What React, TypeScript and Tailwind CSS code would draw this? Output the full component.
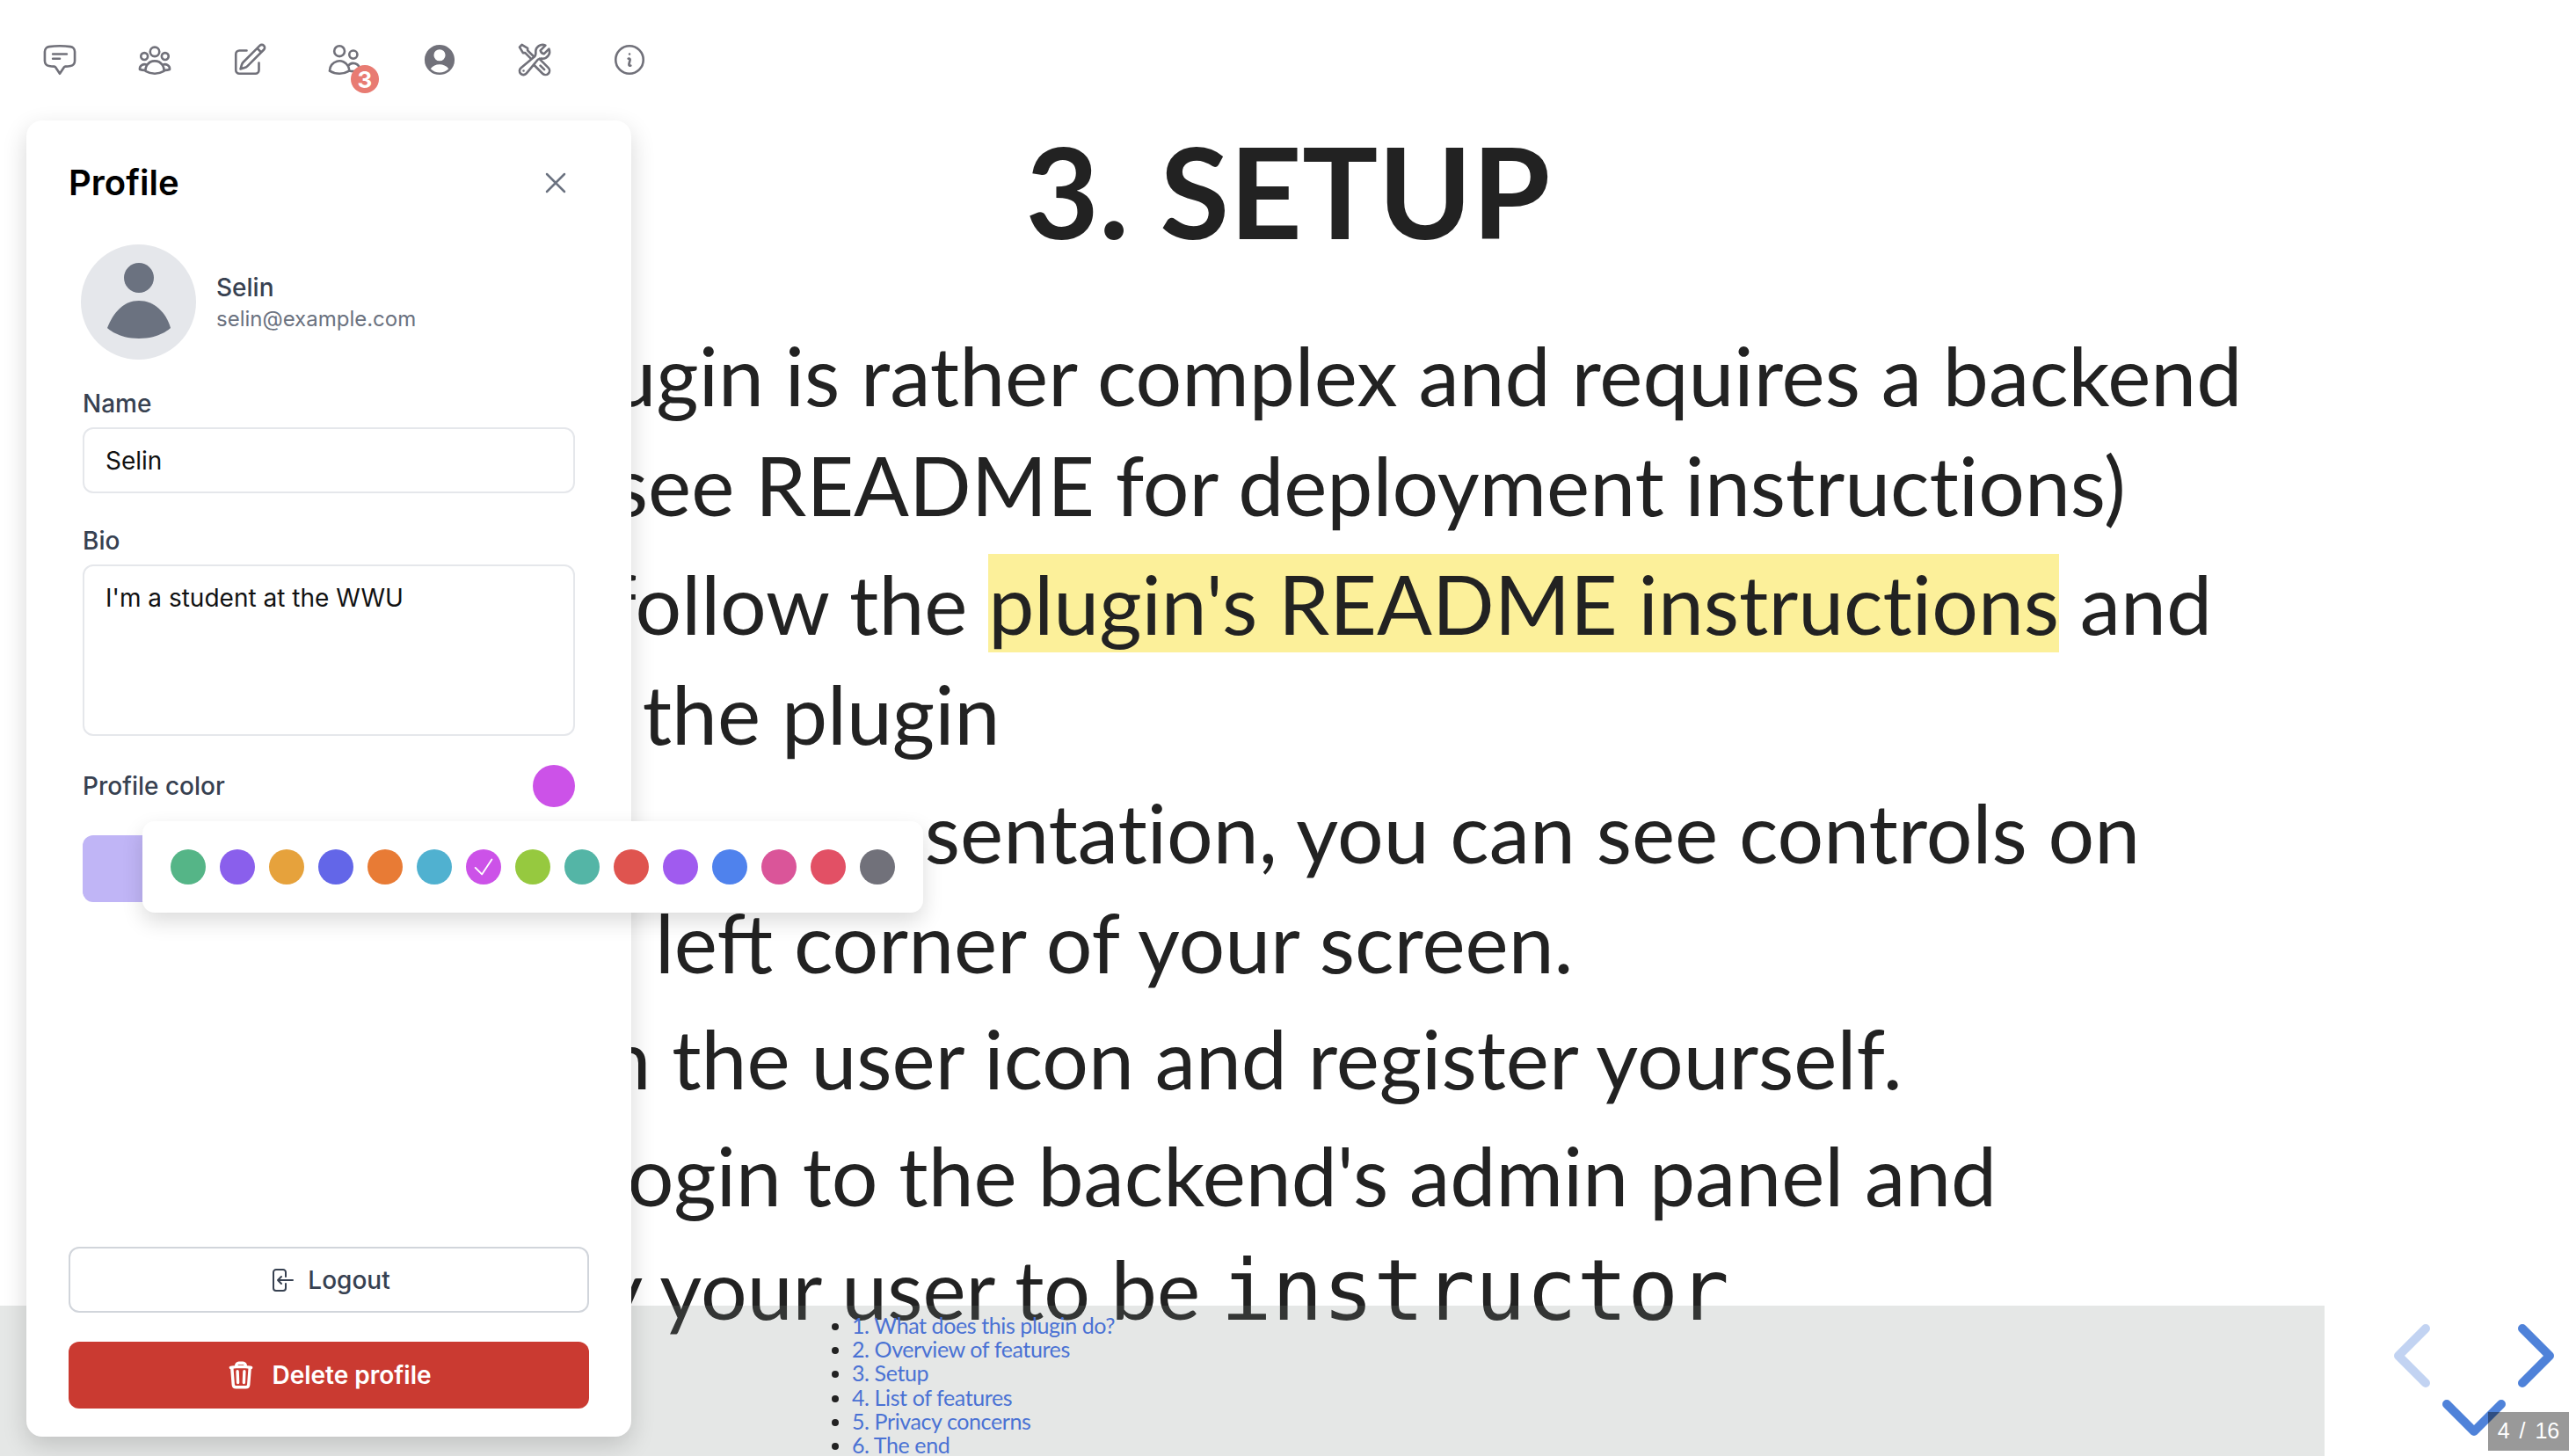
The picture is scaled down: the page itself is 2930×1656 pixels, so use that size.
import React from 'react';
import {
  HiOutlineChatBubbleBottomCenterText,
  HiOutlineUserGroup,
  HiOutlinePencilSquare,
  HiOutlineUsers,
  HiUserCircle,
  HiOutlineWrenchScrewdriver,
  HiOutlineInformationCircle,
  HiOutlineXMark,
  HiOutlineTrash,
  HiOutlineArrowLeftOnRectangle,
  HiOutlineCheck,
} from 'react-icons/hi2';

const swatches = [
  'bg-[#55b587]', 'bg-[#8a5fec]', 'bg-[#e6a23c]', 'bg-[#6366e8]', 'bg-[#e87b35]',
  'bg-[#50b1d0]', 'bg-[#cc52e8]', 'bg-[#96c93f]', 'bg-[#54b5a6]', 'bg-[#df544f]',
  'bg-[#a05bef]', 'bg-[#4f82ed]', 'bg-[#da5599]', 'bg-[#e25065]', 'bg-[#71717a]',
];

const toc = ['1. What does this plugin do?', '2. Overview of features', '3. Setup', '4. List of features', '5. Privacy concerns', '6. The end'];

function Toolbar() {
  return (
    <div className="absolute left-[47px] top-[47px] flex gap-[66px] text-[#71717a]">
      <HiOutlineChatBubbleBottomCenterText className="w-[42px] h-[42px]" />
      <HiOutlineUserGroup className="w-[42px] h-[42px]" />
      <HiOutlinePencilSquare className="w-[42px] h-[42px]" />
      <div className="relative">
        <HiOutlineUsers className="w-[42px] h-[42px]" />
        <span className="absolute left-[28px] top-[27px] w-[32px] h-[32px] rounded-full bg-[#e87b72] text-white text-[26px] font-bold flex items-center justify-center font-['Inter',sans-serif]">3</span>
      </div>
      <HiUserCircle className="w-[42px] h-[42px]" />
      <HiOutlineWrenchScrewdriver className="w-[42px] h-[42px]" />
      <HiOutlineInformationCircle className="w-[42px] h-[42px]" />
    </div>
  );
}

function ProfilePanel() {
  return (
    <div className="absolute left-[30px] top-[137px] w-[688px] h-[1497px] bg-white rounded-[18px] shadow-[0_10px_28px_rgba(0,0,0,0.16)] flex flex-col px-[48px] font-['Inter',sans-serif]">
      <div className="flex items-center justify-between h-[142px]">
        <h2 className="text-[40px] font-semibold text-black">Profile</h2>
        <HiOutlineXMark className="w-[40px] h-[40px] text-[#6b7280] mr-[18px]" />
      </div>
      <div className="flex items-center gap-[23px] pl-[14px] mt-[-1px]">
        <div className="w-[131px] h-[131px] rounded-full bg-[#e5e7eb] flex flex-col items-center pt-[21px]">
          <svg viewBox="0 0 72 86" className="w-[72px] h-[86px]" fill="#6b7280">
            <circle cx="36" cy="17" r="17" />
            <path d="M36 43c-17 0-29 13-36 31 0 0 12 12 36 12s36-12 36-12c-5-18-19-31-36-31z" />
          </svg>
        </div>
        <div className="pt-[3px]">
          <div className="text-[28px] leading-[36px] font-medium text-[#374151]">Selin</div>
          <div className="text-[24px] leading-[36px] text-[#6b7280]">selin@example.com</div>
        </div>
      </div>
      <div className="px-[16px] mt-[30px]">
        <label className="block text-[28px] leading-[40px] font-medium text-[#374151]">Name</label>
        <div className="mt-[7px] h-[75px] border-2 border-[#e5e7eb] rounded-[12px] flex items-center px-[24px] text-[28px] text-[#111]">Selin</div>
        <label className="block mt-[34px] text-[28px] leading-[40px] font-medium text-[#374151]">Bio</label>
        <div className="mt-[7px] h-[195px] border-2 border-[#e5e7eb] rounded-[12px] px-[24px] pt-[16px] text-[28px] leading-[40px] text-[#111]">I'm a student at the WWU</div>
        <div className="flex items-center justify-between mt-[33px]">
          <label className="text-[28px] leading-[40px] font-medium text-[#374151]">Profile color</label>
          <span className="w-[48px] h-[48px] rounded-full bg-[#cc52e8]" />
        </div>
        <div className="mt-[32px] w-[120px] h-[76px] rounded-[12px] bg-[#c0b5f6]" />
      </div>
      <div className="mt-auto pb-[32px] flex flex-col gap-[33px]">
        <button className="h-[75px] border-2 border-[#d1d5db] rounded-[12px] flex items-center justify-center gap-[14px] text-[28px] font-medium text-[#374151]">
          <HiOutlineArrowLeftOnRectangle className="w-[32px] h-[32px]" />
          Logout
        </button>
        <button className="h-[76px] bg-[#ca3a31] rounded-[12px] flex items-center justify-center gap-[18px] text-[28px] font-semibold text-white">
          <HiOutlineTrash className="w-[34px] h-[34px] [stroke-width:2.4]" />
          Delete profile
        </button>
      </div>
    </div>
  );
}

function ColorPopover() {
  return (
    <div className="absolute left-[162px] top-[934px] w-[888px] h-[104px] bg-white rounded-[14px] shadow-[0_10px_25px_rgba(0,0,0,0.14)] flex items-center gap-[16px] pl-[32px]">
      {swatches.map((c, i) => (
        <span key={i} className={`w-[40px] h-[40px] rounded-full flex items-center justify-center ${c}`}>
          {i === 6 && <HiOutlineCheck className="w-[30px] h-[30px] text-white" />}
        </span>
      ))}
    </div>
  );
}

function Slide() {
  return (
    <div className="text-[#222] font-['Lato',sans-serif] text-[93px] leading-[125px] whitespace-nowrap [font-variant-ligatures:none]">
      <h1 className="text-center text-[144px] leading-[170px] font-bold pt-[132px]">3. SETUP</h1>
      <div className="mt-[62px]">
        <p className="pl-[428px]">This plugin is rather complex and requires a backend</p>
        <p className="pl-[399px]">server (see README for deployment instructions)</p>
        <p className="mt-[10px] pl-[399px]">Simply follow the <span className="bg-[#fcf09a]">plugin's README instructions</span> and</p>
        <p className="pl-[469px]">install the plugin</p>
        <p className="mt-[10px] pl-[412px]">During your presentation, you can see controls on</p>
        <p className="pl-[425px]">the top <span className="[font-variant-ligatures:normal]">left</span> corner of your screen.</p>
        <p className="mt-[7px] pl-[414px]">Click on the user icon and register yourself.</p>
        <p className="mt-[8px] pl-[461px]">Then login to the backend's admin panel and</p>
        <p className="mt-[4px] pl-[447px]">modify your user to be <code className="font-['DejaVu_Sans_Mono',monospace] text-[96px]">instructor</code></p>
      </div>
    </div>
  );
}

export default function App() {
  return (
    <div className="relative w-[2930px] h-[1656px] overflow-hidden bg-white">
      <Slide />
      <div className="absolute left-0 bottom-0 w-[2644px] h-[171px] bg-[#7f8782]/20 overflow-hidden font-['Lato',sans-serif] text-[25px] leading-[27.2px] tracking-[-0.4px] text-[#4a72d4]">
        <ul className="list-disc pl-[969px] pt-[9px] marker:text-[#222]">
          {toc.map((t) => (
            <li key={t}>{t}</li>
          ))}
        </ul>
      </div>
      <Toolbar />
      <ProfilePanel />
      <ColorPopover />
      {/* deck controls */}
      <svg className="absolute left-[2723px] top-[1506px] w-[41px] h-[72px]" viewBox="0 0 41 72" fill="none" stroke="#4f82d9" strokeOpacity="0.35" strokeWidth="10" strokeLinecap="round" strokeLinejoin="round"><path d="M36 5 5 36l31 31" /></svg>
      <svg className="absolute left-[2864px] top-[1506px] w-[41px] h-[72px]" viewBox="0 0 41 72" fill="none" stroke="#4f82d9" strokeWidth="10" strokeLinecap="round" strokeLinejoin="round"><path d="m5 5 31 31L5 67" /></svg>
      <svg className="absolute left-[2778px] top-[1592px] w-[72px] h-[41px]" viewBox="0 0 72 41" fill="none" stroke="#4f82d9" strokeWidth="10" strokeLinecap="round" strokeLinejoin="round"><path d="m5 5 31 31L67 5" /></svg>
      <div className="absolute left-[2830px] top-[1606px] w-[92px] h-[44px] bg-black/40 text-white text-[25px] flex items-center justify-center font-['Liberation_Sans',sans-serif] whitespace-pre [word-spacing:4px]">4 / 16</div>
    </div>
  );
}
